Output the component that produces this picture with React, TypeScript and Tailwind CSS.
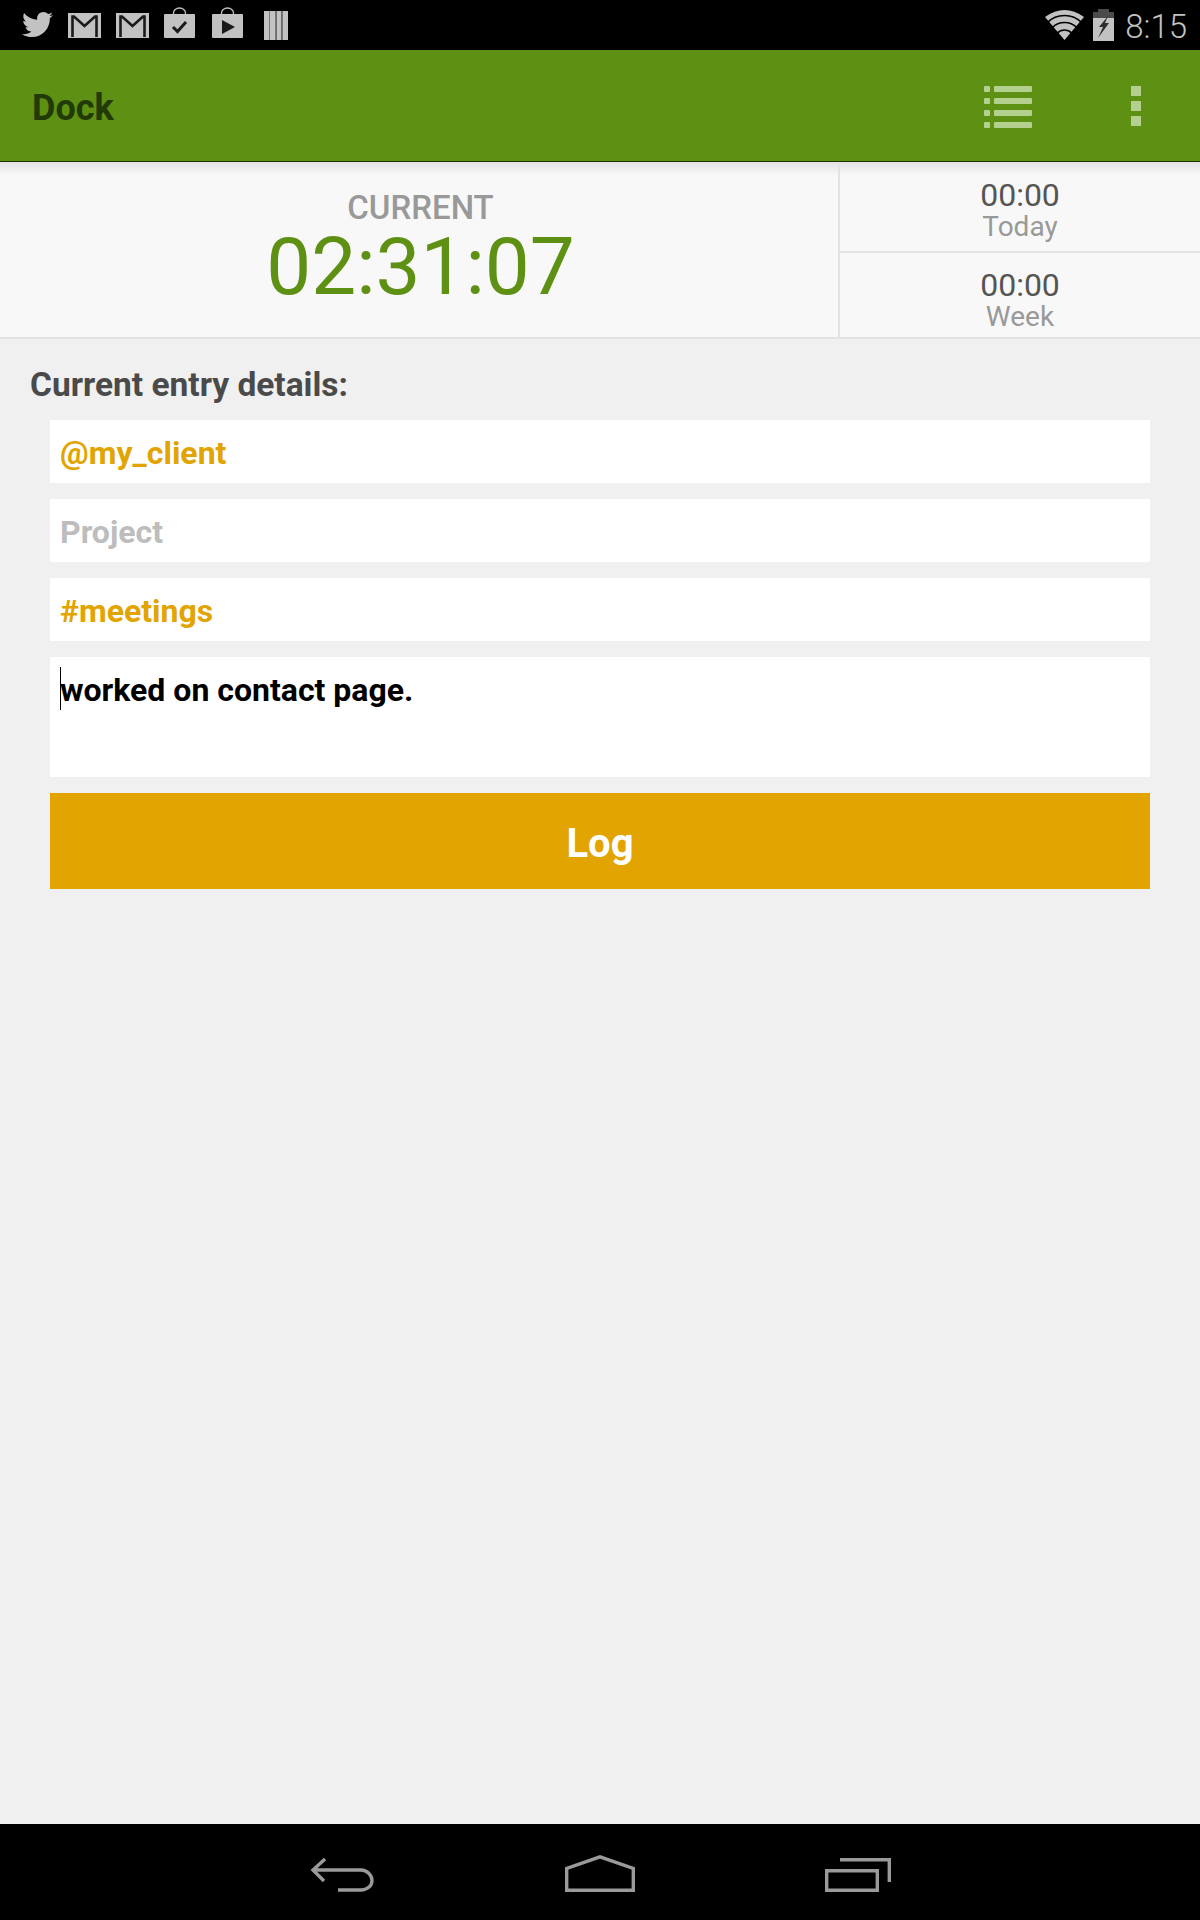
import React from "react";
import { FaTwitter } from "react-icons/fa";

const ICON = "#c2c2c2";
const NAV = "#9a9a9a";

function GmailIcon() {
  return (
    <svg width="33" height="25" viewBox="0 0 33 25">
      <rect width="33" height="25" fill={ICON} />
      <path d="M4.500 24V3.500h1.500L16.500 13 27 3.500h1.500V24" fill="none" stroke="#1a1a1a" strokeWidth="2.600" />
    </svg>
  );
}

function BagIcon({ children }: { children: React.ReactNode }) {
  return (
    <svg width="31" height="31" viewBox="0 0 31 31">
      <path d="M9.500 8V6a6 5 0 0 1 12 0v2" fill="none" stroke={ICON} strokeWidth="1.300" />
      <path d="M1 7h29a1 1 0 0 1 1 1v22a1 1 0 0 1-1 1H1a1 1 0 0 1-1-1V8a1 1 0 0 1 1-1z" fill={ICON} />
      {children}
    </svg>
  );
}

function LibraryIcon() {
  return (
    <svg width="24" height="30" viewBox="0 0 24 30">
      <path d="M0 1h5v29H0zM6 1h5v29H6zM12.500 1h5v29h-5zM19 1h5v29h-5z" fill={ICON} />
      <path d="M5 1h1v29H5zM11 1h1.500v29H11zM17.500 1H19v29h-1.500z" fill="#777" />
    </svg>
  );
}

function WifiIcon() {
  return (
    <svg width="39" height="30" viewBox="0 0 39 30">
      <path d="M19.500 30 0 7Q19.500-7 39 7z" fill={ICON} />
      <circle cx="19.500" cy="30" r="10" fill="none" stroke="#000" strokeWidth="1.600" />
      <circle cx="19.500" cy="30" r="17.500" fill="none" stroke="#000" strokeWidth="1.600" />
      <circle cx="19.500" cy="30" r="24.500" fill="none" stroke="#000" strokeWidth="1.600" />
    </svg>
  );
}

function BatteryIcon() {
  return (
    <svg width="21" height="32" viewBox="0 0 21 32">
      <path d="M5 0h11v3h5v6H0V3h5z" fill="#4a4a4a" />
      <path d="M0 9h21v23H0z" fill={ICON} />
      <path d="M15 7 6 18h4L5 29l11-15h-4l3-7z" fill="#2e2e2e" />
    </svg>
  );
}

function ListIcon() {
  const rows = [0, 12, 24, 36];
  return (
    <svg width="48" height="42" viewBox="0 0 48 42">
      {rows.map((y) => (
        <g key={y} fill="#b4d08f">
          <rect x="0" y={y} width="6" height="6" rx="1" />
          <rect x="10" y={y} width="38" height="6" rx="1" />
        </g>
      ))}
    </svg>
  );
}

function BackIcon() {
  return (
    <svg width="65" height="34" viewBox="0 0 65 34">
      <path d="M15 1 3 12l11 11M3 12h48c6 0 11 5 11 10.500S57 32 51 32H28" fill="none" stroke={NAV} strokeWidth="3.400" />
    </svg>
  );
}

function HomeIcon() {
  return (
    <svg width="70" height="37" viewBox="0 0 70 37">
      <path d="M1.700 35.300V13.500L35 1.800l33.300 11.700v21.800z" fill="none" stroke={NAV} strokeWidth="3.400" />
    </svg>
  );
}

function RecentsIcon() {
  return (
    <svg width="66" height="34" viewBox="0 0 66 34">
      <path d="M1.700 12.700h50.600v19.600H1.700z" fill="none" stroke={NAV} strokeWidth="3.400" />
      <path d="M15 1.700h49.300V24" fill="none" stroke={NAV} strokeWidth="3.400" />
    </svg>
  );
}

function StatusBar() {
  return (
    <div className="h-[50px] shrink-0 bg-black flex items-center justify-between pl-[22px] pr-[13px]">
      <div className="flex items-end self-stretch">
        <FaTwitter className="w-[31px] h-[31px] mr-[15px] mb-[10px]" color={ICON} />
        <div className="flex items-end gap-[15px] mb-[12px]">
          <GmailIcon />
          <GmailIcon />
          <BagIcon>
            <path d="M9 20l4.500 4.500L22 15" fill="none" stroke="#1a1a1a" strokeWidth="3" />
          </BagIcon>
          <div className="ml-[2px]">
            <BagIcon>
              <path d="M10 13l13 7-13 7z" fill="#1a1a1a" />
            </BagIcon>
          </div>
          <div className="ml-[6px] -mb-[2px]">
            <LibraryIcon />
          </div>
        </div>
      </div>
      <div className="flex items-center">
        <WifiIcon />
        <div className="ml-[9px]">
          <BatteryIcon />
        </div>
        <span className="ml-[11px] mt-[2px] text-[33px] leading-none font-light text-[#c2c2c2] font-['Roboto',sans-serif]">8:15</span>
      </div>
    </div>
  );
}

function ActionBar() {
  return (
    <div className="h-[112px] shrink-0 bg-[#5e9014] border-b border-b-[#1f3305] flex items-center pl-[32px]">
      <span className="flex-1 text-[36px] font-bold text-[#223a06] mt-[5px]">Dock</span>
      <div className="mr-[168px] mt-[3px]">
        <ListIcon />
      </div>
    </div>
  );
}

function OverflowDots() {
  return (
    <div className="absolute top-[86px] left-[1131px] flex flex-col gap-[5px]">
      <span className="block w-[10px] h-[10px] bg-[#b4d08f]" />
      <span className="block w-[10px] h-[10px] bg-[#b4d08f]" />
      <span className="block w-[10px] h-[10px] bg-[#b4d08f]" />
    </div>
  );
}

function SmallStat({ value, label, grow }: { value: string; label: string; grow?: boolean }) {
  return (
    <div className={`flex flex-col items-center ${grow ? "h-[91px] pt-[16px] border-b-2 border-b-[#e2e2e2]" : "flex-1 pt-[15px]"}`}>
      <span className="text-[32px] leading-[35px] text-[#555555]">{value}</span>
      <span className="text-[28px] leading-[28px] text-[#999999]">{label}</span>
    </div>
  );
}

function Stats() {
  return (
    <div className="relative h-[177px] shrink-0 bg-[#f8f8f8] border-b-2 border-b-[#e2e2e2] flex">
      <div className="absolute inset-x-0 top-0 h-[14px] bg-gradient-to-b from-[#e4e4e4] to-transparent" />
      <div className="w-[840px] flex flex-col items-center pt-[28px] pl-[3px] border-r-2 border-r-[#e2e2e2] shrink-0">
        <span className="text-[33px] leading-[35px] font-medium text-[#999999]">CURRENT</span>
        <span className="text-[80px] leading-[84px] font-normal text-[#5e9014]">02:31:07</span>
      </div>
      <div className="flex-1 flex flex-col">
        <SmallStat value="00:00" label="Today" grow />
        <SmallStat value="00:00" label="Week" />
      </div>
    </div>
  );
}

function Field({ text, color }: { text: string; color: string }) {
  return (
    <div className="h-[63px] bg-white flex items-center pl-[10px] pt-[2px]">
      <span className={`text-[32px] font-bold ${color}`}>{text}</span>
    </div>
  );
}

export default function App() {
  return (
    <div className="relative w-[1200px] h-[1920px] flex flex-col bg-[#f0f0f0] font-['Roboto',sans-serif]">
      <StatusBar />
      <ActionBar />
      <OverflowDots />
      <Stats />

      <div className="flex-1 pl-[50px] pr-[50px]">
        <h2 className="-ml-[20px] mt-[26px] h-[55px] text-[33.5px] leading-[40px] font-bold text-[#4a4a4a]">Current entry details:</h2>
        <div className="flex flex-col gap-[16px]">
          <Field text="@my_client" color="text-[#e2a400]" />
          <Field text="Project" color="text-[#bdbdbd]" />
          <Field text="#meetings" color="text-[#e2a400]" />
          <div className="h-[120px] bg-white pl-[10px] pt-[11px] relative">
            <span className="absolute left-[10px] top-[10px] w-[1px] h-[43px] bg-black" />
            <span className="text-[32px] leading-[44px] font-bold text-black">worked on contact page.</span>
          </div>
          <button className="h-[96px] bg-[#e2a400] text-white text-[40px] font-bold pt-[6px]">Log</button>
        </div>
      </div>

      <div className="h-[96px] shrink-0 bg-black flex items-end justify-center gap-[190px] pb-[28px]">
        <BackIcon />
        <HomeIcon />
        <RecentsIcon />
      </div>
    </div>
  );
}
